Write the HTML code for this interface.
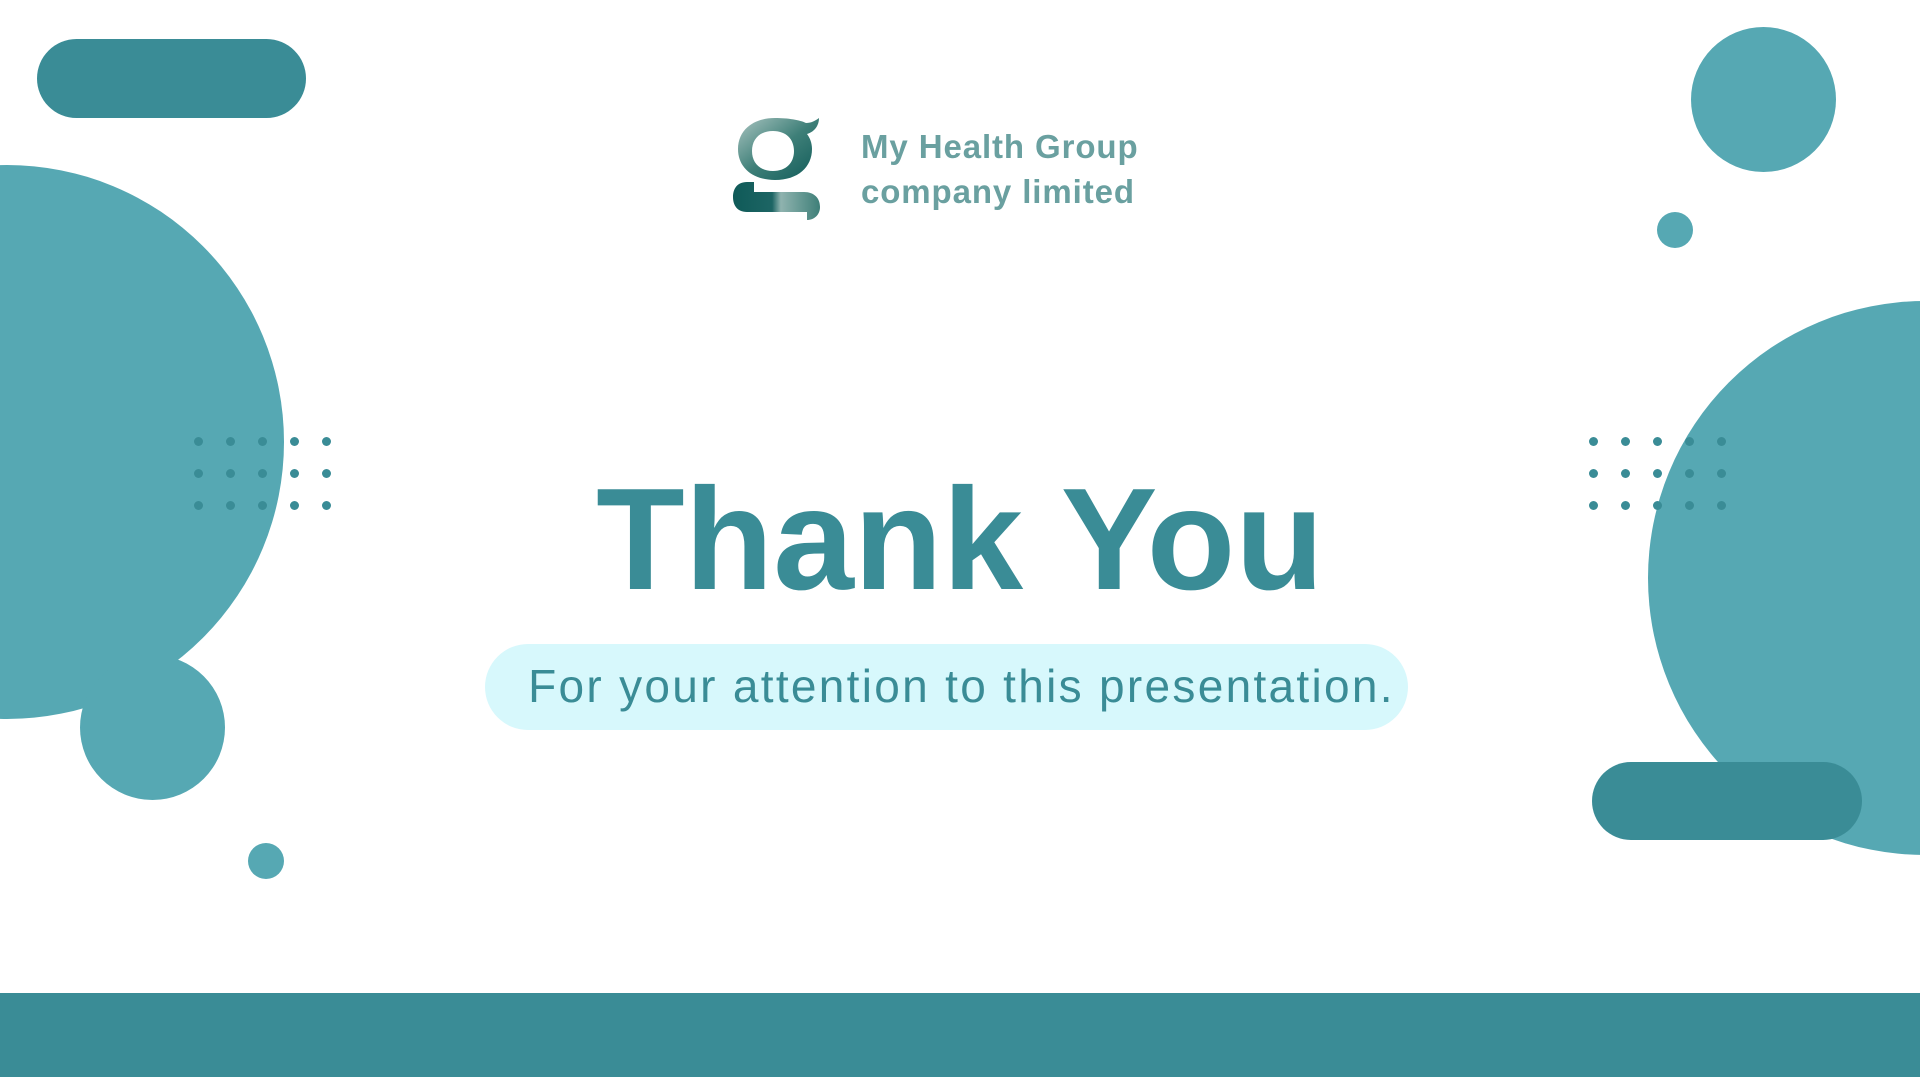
<!DOCTYPE html>
<html><head><meta charset="utf-8"><style>
html,body{margin:0;padding:0}
body{width:1920px;height:1080px;position:relative;overflow:hidden;background:#fff;font-family:"Liberation Sans",sans-serif}
.a{position:absolute}
.c{position:absolute;border-radius:50%;background:#56a8b3}
.p{position:absolute;background:#3a8c96;border-radius:40px}
.dot{position:absolute;width:9px;height:9px;border-radius:50%;background:#3a8c96}
</style></head><body>
<div class="p" style="left:37px;top:39px;width:269px;height:79px"></div>
<div class="c" style="left:-270px;top:165px;width:554px;height:554px"></div>
<div class="c" style="left:80px;top:655px;width:145px;height:145px;border:0"></div>
<div class="c" style="left:248px;top:843px;width:36px;height:36px"></div>
<div class="c" style="left:1691px;top:27px;width:145px;height:145px"></div>
<div class="c" style="left:1657px;top:212px;width:36px;height:36px"></div>
<div class="c" style="left:1648px;top:301px;width:554px;height:554px"></div>
<div class="p" style="left:1592px;top:762px;width:270px;height:78px"></div>
<div id="dl"></div>
<div class="a" style="left:0;top:993px;width:1920px;height:84px;background:#3a8c96"></div>

<svg class="a" style="left:732px;top:116px" width="92" height="106" viewBox="0 0 92 106">
<defs><linearGradient id="g" x1="0" y1="0" x2="1" y2="1"><stop offset="0" stop-color="#a9c4c0"/><stop offset="0.5" stop-color="#3e7f78"/><stop offset="1" stop-color="#0f5a58"/></linearGradient>
<linearGradient id="h" x1="0" y1="0" x2="1" y2="0"><stop offset="0" stop-color="#0f5a58"/><stop offset="0.45" stop-color="#1d6564"/><stop offset="0.55" stop-color="#8fb3af"/><stop offset="1" stop-color="#3e7f78"/></linearGradient></defs>
<path fill-rule="evenodd" d="M43 2C20 2 6 15 6 33s14 31 37 31 37-13 37-31c0-6-2-11-5-15 7-2 12-8 12-16-4 3-8 5-13 5C68 4 56 2 43 2zM41 15c13 0 21 8 21 20s-8 20-21 20-21-8-21-20 8-20 21-20z" fill="url(#g)"/>
<path d="M15 66C5 66 1 73 1 81s4 15 14 15h60v8c7 0 13-5 13-13 0-9-6-15-16-15H22V66z" fill="url(#h)"/>
</svg>
<div class="a" style="left:861px;top:124px;font-weight:bold;font-size:33px;line-height:45px;color:#6aa0a0;letter-spacing:0.9px">My Health Group<br>company limited</div>

<div class="a" style="left:0;width:1920px;top:464px;text-align:center;font-weight:bold;font-size:145px;line-height:150px;color:#3a8c96;letter-spacing:0px">Thank You</div>
<div class="a" style="left:485px;top:644px;width:923px;height:86px;border-radius:43px;background:#d7f8fc"></div>
<div class="a" style="left:500px;width:923px;top:657px;text-align:center;font-size:46px;line-height:58px;color:#3a8c96;letter-spacing:2.3px">For your attention to this presentation.</div>
<script>
var h='';[[198],[1593]].forEach(function(o){for(var i=0;i<5;i++)for(var j=0;j<3;j++)h+='<div class="dot" style="left:'+(o[0]+i*32-4)+'px;top:'+(441+j*32-4)+'px"></div>';});
document.getElementById('dl').innerHTML=h;
</script>
</body></html>
